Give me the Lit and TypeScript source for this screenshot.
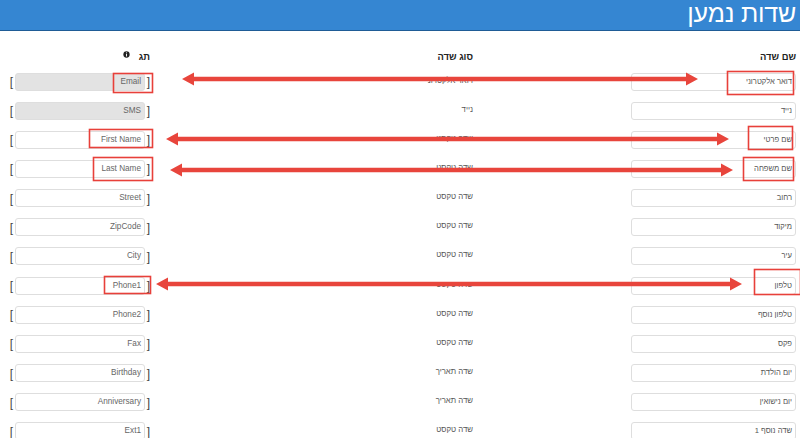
import { LitElement, html, css, svg } from "lit";
import { customElement } from "lit/decorators.js";

const rows: [string, string, string, boolean][] = [
  ["דואר אלקטרוני", "דואר אלקטרוני", "Email", true],
  ["נייד", "נייד", "SMS", true],
  ["שם פרטי", "שדה טקסט", "First Name", false],
  ["שם משפחה", "שדה טקסט", "Last Name", false],
  ["רחוב", "שדה טקסט", "Street", false],
  ["מיקוד", "שדה טקסט", "ZipCode", false],
  ["עיר", "שדה טקסט", "City", false],
  ["טלפון", "שדה טקסט", "Phone1", false],
  ["טלפון נוסף", "שדה טקסט", "Phone2", false],
  ["פקס", "שדה טקסט", "Fax", false],
  ["יום הולדת", "שדה תאריך", "Birthday", false],
  ["יום נישואין", "שדה תאריך", "Anniversary", false],
  ["שדה נוסף 1", "שדה טקסט", "Ext1", false],
];

const boxes = [
  [113.5, 73.5, 39, 19], [89.5, 129.5, 63, 18], [93.5, 157.5, 59, 23], [104.5, 276.5, 46, 17],
  [727.5, 71.5, 66, 23], [748.5, 126.5, 44, 23], [743.5, 157.5, 50, 23], [754.5, 269.5, 46, 25],
];
const arrows = [
  [182, 698, 79], [166, 729, 139], [170, 733, 170], [156, 742, 284],
];

@customElement("app-root")
export class AppRoot extends LitElement {
  static styles = css`
    :host { display: block; width: 800px; height: 438px; overflow: hidden; position: relative; background: #fff;
      font-family: "Liberation Sans", Arial, sans-serif; }
    .bar { height: 30px; background: #3586d2; border-bottom: 1px solid #1f5c96; direction: rtl; padding-right: 4px; color: #fff;
      font-size: 25px; letter-spacing: -0.2px; line-height: 27px; white-space: nowrap; font-weight: 400; }
    .table { direction: rtl; padding: 19px 4px 0 0; display: flex; flex-direction: column; }
    .head, .row { display: grid; grid-template-columns: 165px 158px 323px 150px; }
    .head { font-size: 9.4px; font-weight: 700; color: #222; height: 22px; line-height: 14px; }
    .taghead { display: flex; gap: 9px; width: 150px; box-sizing: border-box; }
    .info { width: 7px; height: 7px; margin-top: 1px; }
    .rows { display: flex; flex-direction: column; gap: 11.17px; }
    .row { height: 18px; align-items: center; }
    .field { box-sizing: border-box; height: 18px; border: 1px solid #dedede; border-radius: 3px; background: #fff; font-size: 7.6px;
      color: #555; padding: 0 3px; line-height: 16px; white-space: nowrap; overflow: hidden; }
    .field.disabled { background: #e3e3e3; }
    .name { width: 165px; }
    .type { font-size: 7.8px; color: #555; line-height: 12px; margin-top: -2px; white-space: nowrap; }
    .tagcell { display: flex; align-items: center; gap: 2px; width: 150px; box-sizing: border-box; }
    .tagcell .field { width: 130px; direction: ltr; text-align: right; font-size: 8.2px; color: #666; }
    .br { font-size: 12px; color: #444; width: 3px; text-align: center; line-height: 18px; margin-top: 1px; }
    .overlay { position: absolute; left: 0; top: 0; width: 800px; height: 438px; pointer-events: none; }
  `;

  render() {
    return html`
      <div class="bar">שדות נמען</div>
      <div class="table">
        <div class="head">
          <div>שם שדה</div>
          <div></div>
          <div>סוג שדה</div>
          <div class="taghead">
            <span>תג</span>
            <svg class="info" viewBox="0 0 8 8"><circle cx="4" cy="4" r="3.6" fill="#222"></circle><rect x="3.5" y="3.3" width="1.1" height="3" fill="#fff"></rect><rect x="3.5" y="1.6" width="1.1" height="1" fill="#fff"></rect></svg>
          </div>
        </div>
        <div class="rows">
          ${rows.map(([n, t, tag, dis]) => html`
            <div class="row">
              <div class="field name">${n}</div>
              <div></div>
              <div class="type">${t}</div>
              <div class="tagcell">
                <span class="br">[</span>
                <div class="field ${dis ? "disabled" : ""}">${tag}</div>
                <span class="br">]</span>
              </div>
            </div>`)}
        </div>
      </div>
      <svg class="overlay" viewBox="0 0 800 438">
        ${boxes.map(([x, y, w, h]) => svg`<rect x=${x} y=${y} width=${w} height=${h} fill="none" stroke="#e8403a" stroke-width="1.6"></rect>`)}
        ${arrows.map(([a, b, y]) => svg`
          <path d="M${a + 12} ${y - 2.2}H${b - 12}V${y - 6.4}L${b} ${y}L${b - 12} ${y + 6.4}V${y + 2.2}H${a + 12}V${y + 6.4}L${a} ${y}L${a + 12} ${y - 6.4}Z" fill="#e8453c"></path>`)}
      </svg>
    `;
  }
}
